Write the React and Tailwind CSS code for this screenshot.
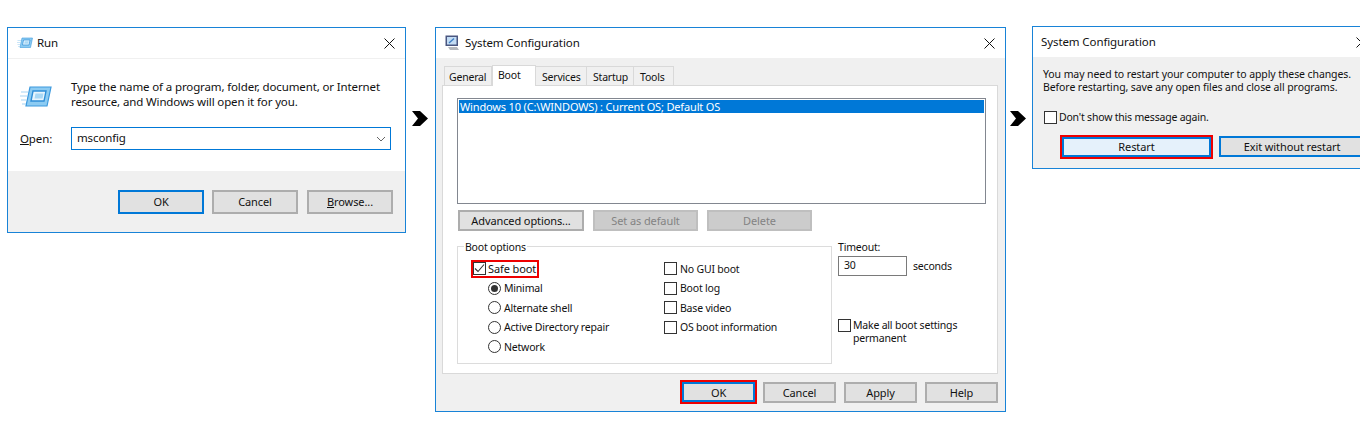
const font = "font-['Noto_Sans','Open_Sans',sans-serif]";
const small = "text-[10.5px] tracking-[-0.2px]";
const title = "text-[11.5px] tracking-[-0.1px]";

function CloseX() {
  return (
    <svg width="11" height="11" viewBox="0 0 11 11" className="shrink-0">
      <path d="M0.5 0.5L10.5 10.5M10.5 0.5L0.5 10.5" stroke="#111" strokeWidth="1" fill="none" />
    </svg>
  );
}

function RunIcon({ size }) {
  return (
    <svg width={size} height={size * 0.72} viewBox="0 0 32 23" className="shrink-0">
      <path d="M10 2H31L27 21H6Z" fill="#8ccbf2" stroke="#3d9ade" strokeWidth="1.2" />
      <path d="M13 6H26L24 16H11Z" fill="#e8f5fd" stroke="#2f8fd8" strokeWidth="1.4" />
      <path d="M15.5 8.5H23.5L22.5 13.5H14.5Z" fill="#a9d8f5" />
      <path d="M1 7H8M0 11H7M1 15H6M2 19H6" stroke="#a5d4f3" strokeWidth="1.2" />
    </svg>
  );
}

function MonitorIcon() {
  return (
    <svg width="15" height="16" viewBox="0 0 15 16" className="shrink-0">
      <path d="M0.5 0.5H13V11H0.5Z" fill="#4a5680" />
      <path d="M2 2H11.5V9.5H2Z" fill="#c3dcf4" />
      <path d="M4 8L9 3.5" stroke="#3f7fc4" strokeWidth="1.4" />
      <path d="M3 12H12L14 15H5Z" fill="#b4b7bc" />
    </svg>
  );
}

function Arrow() {
  return (
    <svg width="16" height="15" viewBox="0 0 16 15" className="shrink-0">
      <polygon points="0,0 8,0 16,7.5 8,15 0,15 6,7.5" fill="#000" />
    </svg>
  );
}

function Btn({ children, w = "w-[73px]", h = "h-[21px]", kind = "normal", pad = "pt-[2px]" }) {
  const styles = {
    normal: "border-2 border-[#adadad] bg-[#e1e1e1] text-[#111]",
    focus: "border-2 border-[#0078d7] bg-[#e1e1e1] text-[#111]",
    hover: "border-2 border-[#0078d7] bg-[#e5f1fb] text-[#111]",
    off: "border-2 border-[#bfbfbf] bg-[#cccccc] text-[#838383]",
  };
  return (
    <div className={`${w} ${h} ${pad} ${styles[kind]} flex items-center justify-center shrink-0`}>
      {children}
    </div>
  );
}

function Check({ checked }) {
  return (
    <span className="w-[13px] h-[13px] border border-[#333] bg-white shrink-0 flex items-center justify-center">
      {checked && (
        <svg width="11" height="11" viewBox="0 0 11 11">
          <path d="M1 5.5L4 8.5L10 1.5" stroke="#333" strokeWidth="1.1" fill="none" />
        </svg>
      )}
    </span>
  );
}

function Radio({ on }) {
  return (
    <span className="w-[13px] h-[13px] rounded-full border border-[#333] bg-white shrink-0 flex items-center justify-center">
      {on && <span className="w-[7px] h-[7px] rounded-full bg-[#333]" />}
    </span>
  );
}

function Tab({ label, w, active }) {
  if (active) {
    return (
      <div className={`${w} h-[21px] relative z-10 -mb-px border border-b-0 border-[#d9d9d9] bg-white pl-[5px] leading-[18px] ${small}`}>
        {label}
      </div>
    );
  }
  return (
    <div className={`${w} h-[19px] border border-l-0 first:border-l first:pl-[4px] border-b-0 border-[#d9d9d9] bg-[#f0f0f0] pl-[6px] leading-[20px] ${small}`}>
      {label}
    </div>
  );
}

function RunDialog() {
  return (
    <div className="w-[399px] h-[206px] border border-[#1883d7] bg-white shrink-0 flex flex-col">
      <div className="h-[31px] shrink-0 flex items-center justify-between pl-[9px] pr-[10px] border-b border-[#f0f0f0]">
        <div className={`flex items-center gap-[4px] ${title}`}>
          <RunIcon size={16} />
          <span>Run</span>
        </div>
        <CloseX />
      </div>
      <div className="flex-1 px-[12px] pt-[20px] text-[11.5px] tracking-[-0.13px]">
        <div className="flex">
          <div className="w-[51px] pt-[6px]">
            <RunIcon size={32} />
          </div>
          <p className="leading-[15px]">
            Type the name of a program, folder, document, or Internet
            <br />
            resource, and Windows will open it for you.
          </p>
        </div>
        <div className="flex items-center mt-[18px]">
          <span className="w-[51px]">
            <u>O</u>pen:
          </span>
          <div className="w-[320px] h-[23px] border border-[#0078d7] flex items-center justify-between pl-[5px] pr-[4px]">
            <span className="pb-[2px]">msconfig</span>
            <svg width="10" height="6" viewBox="0 0 10 6">
              <path d="M1 1L5 5L9 1" stroke="#666" fill="none" />
            </svg>
          </div>
        </div>
      </div>
      <div className="h-[61px] shrink-0 bg-[#f0f0f0] flex justify-end pt-[19px] pr-[12px]">
        <Btn w="w-[86px]" h="h-[24px]" pad="" kind="focus">OK</Btn>
        <div className="ml-[8px]">
          <Btn w="w-[86px]" h="h-[24px]" pad="">Cancel</Btn>
        </div>
        <div className="ml-[9px]">
          <Btn w="w-[86px]" h="h-[24px]" pad="">
            <span><u>B</u>rowse...</span>
          </Btn>
        </div>
      </div>
    </div>
  );
}

function OptionRow({ children, className = "" }) {
  return <div className={`h-[19.5px] flex items-center ${className}`}>{children}</div>;
}

function BootPanel() {
  return (
    <div className="w-[556px] h-[289px] border border-[#d9d9d9] bg-white px-[14px] pt-[12px]">
      <div className="h-[106px] w-[529px] border border-[#828790] p-px">
        <div className="h-[13px] bg-[#0078d7] text-white leading-[13px] pl-[1px] tracking-[-0.16px]">
          Windows 10 (C:\WINDOWS) : Current OS; Default OS
        </div>
      </div>
      <div className="flex gap-[9px] mt-[6px] pl-px">
        <Btn w="w-[126px]">Advanced options...</Btn>
        <Btn w="w-[105px]" kind="off">Set as default</Btn>
        <Btn w="w-[105px]" kind="off">Delete</Btn>
      </div>
      <div className="flex mt-[9px]">
        <div className="relative w-[375px] h-[118px] mt-[6px] border border-[#dcdcdc] pl-[13px] pt-[12px] flex">
          <span className={`absolute -top-[7px] left-[6px] bg-white px-px leading-[15px] ${small}`}>Boot options</span>
          <div className="w-[193px]">
            <OptionRow>
              <div className="h-[18px] w-[68px] border-2 border-[#ee0000] flex items-center gap-[2px]">
                <Check checked />
                <span>Safe boot</span>
              </div>
            </OptionRow>
            {[
              ["Minimal", true],
              ["Alternate shell", false],
              ["Active Directory repair", false],
              ["Network", false],
            ].map(([label, on]) => (
              <OptionRow key={label} className="pl-[17px] gap-[3px]">
                <Radio on={on} />
                <span className={`pt-[2px] ${small}`}>{label}</span>
              </OptionRow>
            ))}
          </div>
          <div>
            {["No GUI boot", "Boot log", "Base video", "OS boot information"].map((label) => (
              <OptionRow key={label} className="gap-[3px]">
                <Check />
                <span className={`pt-[2px] ${small}`}>{label}</span>
              </OptionRow>
            ))}
          </div>
        </div>
        <div className={`ml-[6px] ${small}`}>
          <div className="leading-[15px]">Timeout:</div>
          <div className="flex items-center mt-px">
            <div className="w-[69px] h-[20px] border border-[#7a7a7a] flex items-center pl-[5px]">30</div>
            <span className="ml-[6px] pt-[2px]">seconds</span>
          </div>
          <div className="flex mt-[43px] gap-[2px]">
            <Check />
            <span className="leading-[13px]">
              Make all boot settings
              <br />
              permanent
            </span>
          </div>
        </div>
      </div>
    </div>
  );
}

function SystemConfig() {
  return (
    <div className="w-[571px] h-[385px] border border-[#1883d7] bg-[#f0f0f0] shrink-0 flex flex-col">
      <div className="h-[30px] shrink-0 bg-white flex items-center justify-between pl-[9px] pr-[10px]">
        <div className={`flex items-center gap-[5px] ${title}`}>
          <MonitorIcon />
          <span>System Configuration</span>
        </div>
        <CloseX />
      </div>
      <div className="flex items-end h-[27px] shrink-0 pl-[8px]">
        <Tab label="General" w="w-[48px]" />
        <Tab label="Boot" w="w-[44px]" active />
        <Tab label="Services" w="w-[51px]" />
        <Tab label="Startup" w="w-[47px]" />
        <Tab label="Tools" w="w-[40px]" />
      </div>
      <div className="pl-[6px]">
        <BootPanel />
      </div>
      <div className="flex justify-end items-center pr-[7px] pt-[6px]">
        <div className="w-[77px] h-[24px] border-2 border-[#ee0000] flex items-center justify-center mr-[6px]">
          <Btn kind="focus" h="h-[20px]">OK</Btn>
        </div>
        <Btn>Cancel</Btn>
        <div className="ml-[8px]"><Btn>Apply</Btn></div>
        <div className="ml-[8px]"><Btn>Help</Btn></div>
      </div>
    </div>
  );
}

function RestartDialog() {
  return (
    <div className="w-[346px] h-[143px] -mt-px border border-[#1883d7] bg-[#f0f0f0] shrink-0 flex flex-col">
      <div className={`h-[30px] shrink-0 bg-white flex items-center justify-between pl-[8px] pr-[10px] ${title}`}>
        <span>System Configuration</span>
        <CloseX />
      </div>
      <div className="pl-[10px] pt-[11px]">
        <p className="leading-[13px] text-[10.5px] tracking-[-0.09px]">
          You may need to restart your computer to apply these changes.
          <br />
          Before restarting, save any open files and close all programs.
        </p>
        <div className="flex items-center gap-[2px] mt-[16px] pl-px">
          <Check />
          <span className={small}>Don't show this message again.</span>
        </div>
        <div className="flex items-center mt-[9px] pl-[17px]">
          <div className="w-[153px] h-[24px] border-2 border-[#ee0000] flex items-center justify-center">
            <Btn w="w-[149px]" h="h-[20px]" pad="" kind="hover">Restart</Btn>
          </div>
          <div className="ml-[6px]">
            <Btn w="w-[146px]" pad="" kind="focus">Exit without restart</Btn>
          </div>
        </div>
      </div>
    </div>
  );
}

export default function App() {
  return (
    <div className={`w-[1360px] h-[434px] overflow-hidden bg-white flex items-start pl-[7px] pt-[27px] text-[11px] tracking-[-0.1px] whitespace-nowrap text-[#111] ${font}`}>
      <RunDialog />
      <div className="ml-[6px] mr-[7px] mt-[84px]">
        <Arrow />
      </div>
      <SystemConfig />
      <div className="ml-[4px] mr-[6px] mt-[84px]">
        <Arrow />
      </div>
      <RestartDialog />
    </div>
  );
}
